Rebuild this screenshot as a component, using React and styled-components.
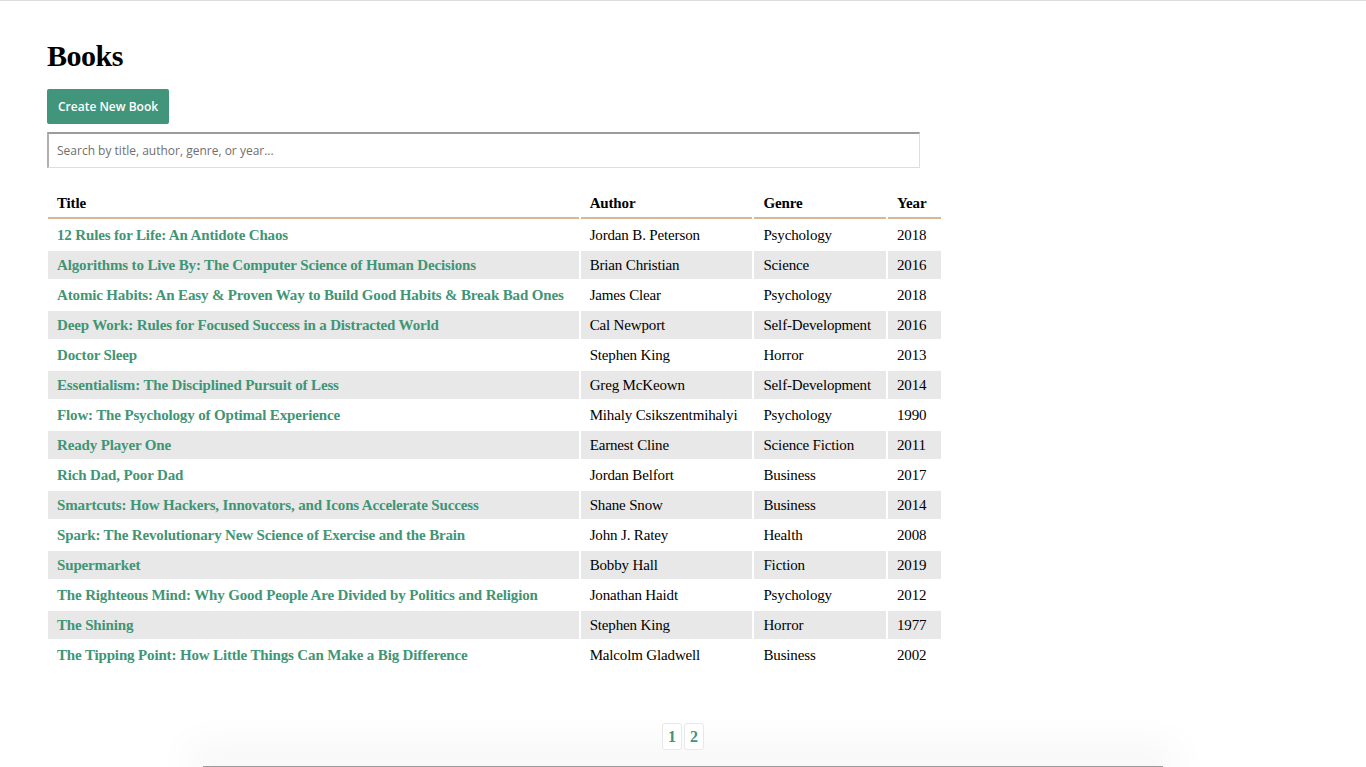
import React, { useState } from 'react';
import styled, { createGlobalStyle } from 'styled-components';

const GlobalStyle = createGlobalStyle`
  html, body {
    margin: 0;
    padding: 0;
    background: #fff;
  }
  body {
    font-family: "Liberation Serif", "Times New Roman", serif;
    color: #000;
    border-top: 1px solid #dcdcdc;
  }
`;

const Page = styled.div`
  padding: 36px 47px 0;
  display: flex;
  flex-direction: column;
  min-height: 730px;
  box-sizing: border-box;
`;

const Title = styled.h1`
  font-size: 30px;
  letter-spacing: -0.5px;
  font-weight: bold;
  margin: 0 0 15px;
  line-height: 37px;
`;

const CreateButton = styled.button`
  align-self: flex-start;
  height: 35px;
  padding: 0 11px;
  background: #41957a;
  color: #fff;
  border: none;
  border-radius: 2px;
  font-family: "Open Sans", "DejaVu Sans", sans-serif;
  font-weight: 600;
  font-size: 12px;
  cursor: pointer;
`;

const SearchInput = styled.input`
  width: 873px;
  height: 36px;
  box-sizing: border-box;
  margin-top: 8px;
  padding: 0 8px;
  border: 1px solid #dedede;
  border-top: 2px solid #9c9c9c;
  border-left: 2px solid #b0b0b0;
  font-family: "Open Sans", "DejaVu Sans", sans-serif;
  font-size: 12px;
  outline: none;

  &::placeholder {
    color: #6f6f6f;
  }
`;

const Table = styled.table`
  border-collapse: separate;
  border-spacing: 2px;
  margin: 19px 0 0 -1px;
  align-self: flex-start;
  font-size: 15px;
  letter-spacing: -0.15px;
`;

const Th = styled.th`
  text-align: left;
  font-weight: bold;
  padding: 5px 15px 5px 9px;
  line-height: 18px;
  border-bottom: 2px solid #dab792;
`;

const Row = styled.tr`
  background: ${({ $striped }) => ($striped ? '#e8e8e8' : 'transparent')};
`;

const Td = styled.td`
  padding: 5px 15px 5px 9px;
  line-height: 18px;
  white-space: nowrap;
`;

const BookLink = styled.a`
  color: #3f9575;
  font-weight: bold;
  text-decoration: none;
`;

const Pagination = styled.div`
  display: flex;
  justify-content: center;
  gap: 2px;
  margin-top: 52px;
`;

const PageButton = styled.button`
  width: 20px;
  height: 27px;
  padding: 0;
  border: 1px solid #e8e8e8;
  border-radius: 3px;
  background: #fff;
  color: #3f9575;
  font-family: "Liberation Serif", "Times New Roman", serif;
  font-weight: bold;
  font-size: 16px;
  cursor: pointer;
`;

const FooterEdge = styled.div`
  width: 960px;
  height: 1px;
  margin: 16px auto 0;
  background: #9a9a9a;
  box-shadow: 0 -4px 40px 14px rgba(0, 0, 0, 0.05);
`;

const books = [
  ['12 Rules for Life: An Antidote Chaos', 'Jordan B. Peterson', 'Psychology', 2018],
  ['Algorithms to Live By: The Computer Science of Human Decisions', 'Brian Christian', 'Science', 2016],
  ['Atomic Habits: An Easy & Proven Way to Build Good Habits & Break Bad Ones', 'James Clear', 'Psychology', 2018],
  ['Deep Work: Rules for Focused Success in a Distracted World', 'Cal Newport', 'Self-Development', 2016],
  ['Doctor Sleep', 'Stephen King', 'Horror', 2013],
  ['Essentialism: The Disciplined Pursuit of Less', 'Greg McKeown', 'Self-Development', 2014],
  ['Flow: The Psychology of Optimal Experience', 'Mihaly Csikszentmihalyi', 'Psychology', 1990],
  ['Ready Player One', 'Earnest Cline', 'Science Fiction', 2011],
  ['Rich Dad, Poor Dad', 'Jordan Belfort', 'Business', 2017],
  ['Smartcuts: How Hackers, Innovators, and Icons Accelerate Success', 'Shane Snow', 'Business', 2014],
  ['Spark: The Revolutionary New Science of Exercise and the Brain', 'John J. Ratey', 'Health', 2008],
  ['Supermarket', 'Bobby Hall', 'Fiction', 2019],
  ['The Righteous Mind: Why Good People Are Divided by Politics and Religion', 'Jonathan Haidt', 'Psychology', 2012],
  ['The Shining', 'Stephen King', 'Horror', 1977],
  ['The Tipping Point: How Little Things Can Make a Big Difference', 'Malcolm Gladwell', 'Business', 2002],
];

const App = () => {
  const [search, setSearch] = useState('');

  return (
    <>
      <GlobalStyle />
      <Page>
        <Title>Books</Title>
        <CreateButton>Create New Book</CreateButton>
        <SearchInput
          type="text"
          placeholder="Search by title, author, genre, or year..."
          value={search}
          onChange={(e) => setSearch(e.target.value)}
        />
        <Table>
          <thead>
            <tr>
              <Th>Title</Th>
              <Th>Author</Th>
              <Th>Genre</Th>
              <Th>Year</Th>
            </tr>
          </thead>
          <tbody>
            {books.map(([title, author, genre, year], i) => (
              <Row key={title} $striped={i % 2 === 1}>
                <Td>
                  <BookLink href="#">{title}</BookLink>
                </Td>
                <Td>{author}</Td>
                <Td>{genre}</Td>
                <Td>{year}</Td>
              </Row>
            ))}
          </tbody>
        </Table>
        <Pagination>
          <PageButton>1</PageButton>
          <PageButton>2</PageButton>
        </Pagination>
      </Page>
      <FooterEdge />
    </>
  );
};

export default App;
